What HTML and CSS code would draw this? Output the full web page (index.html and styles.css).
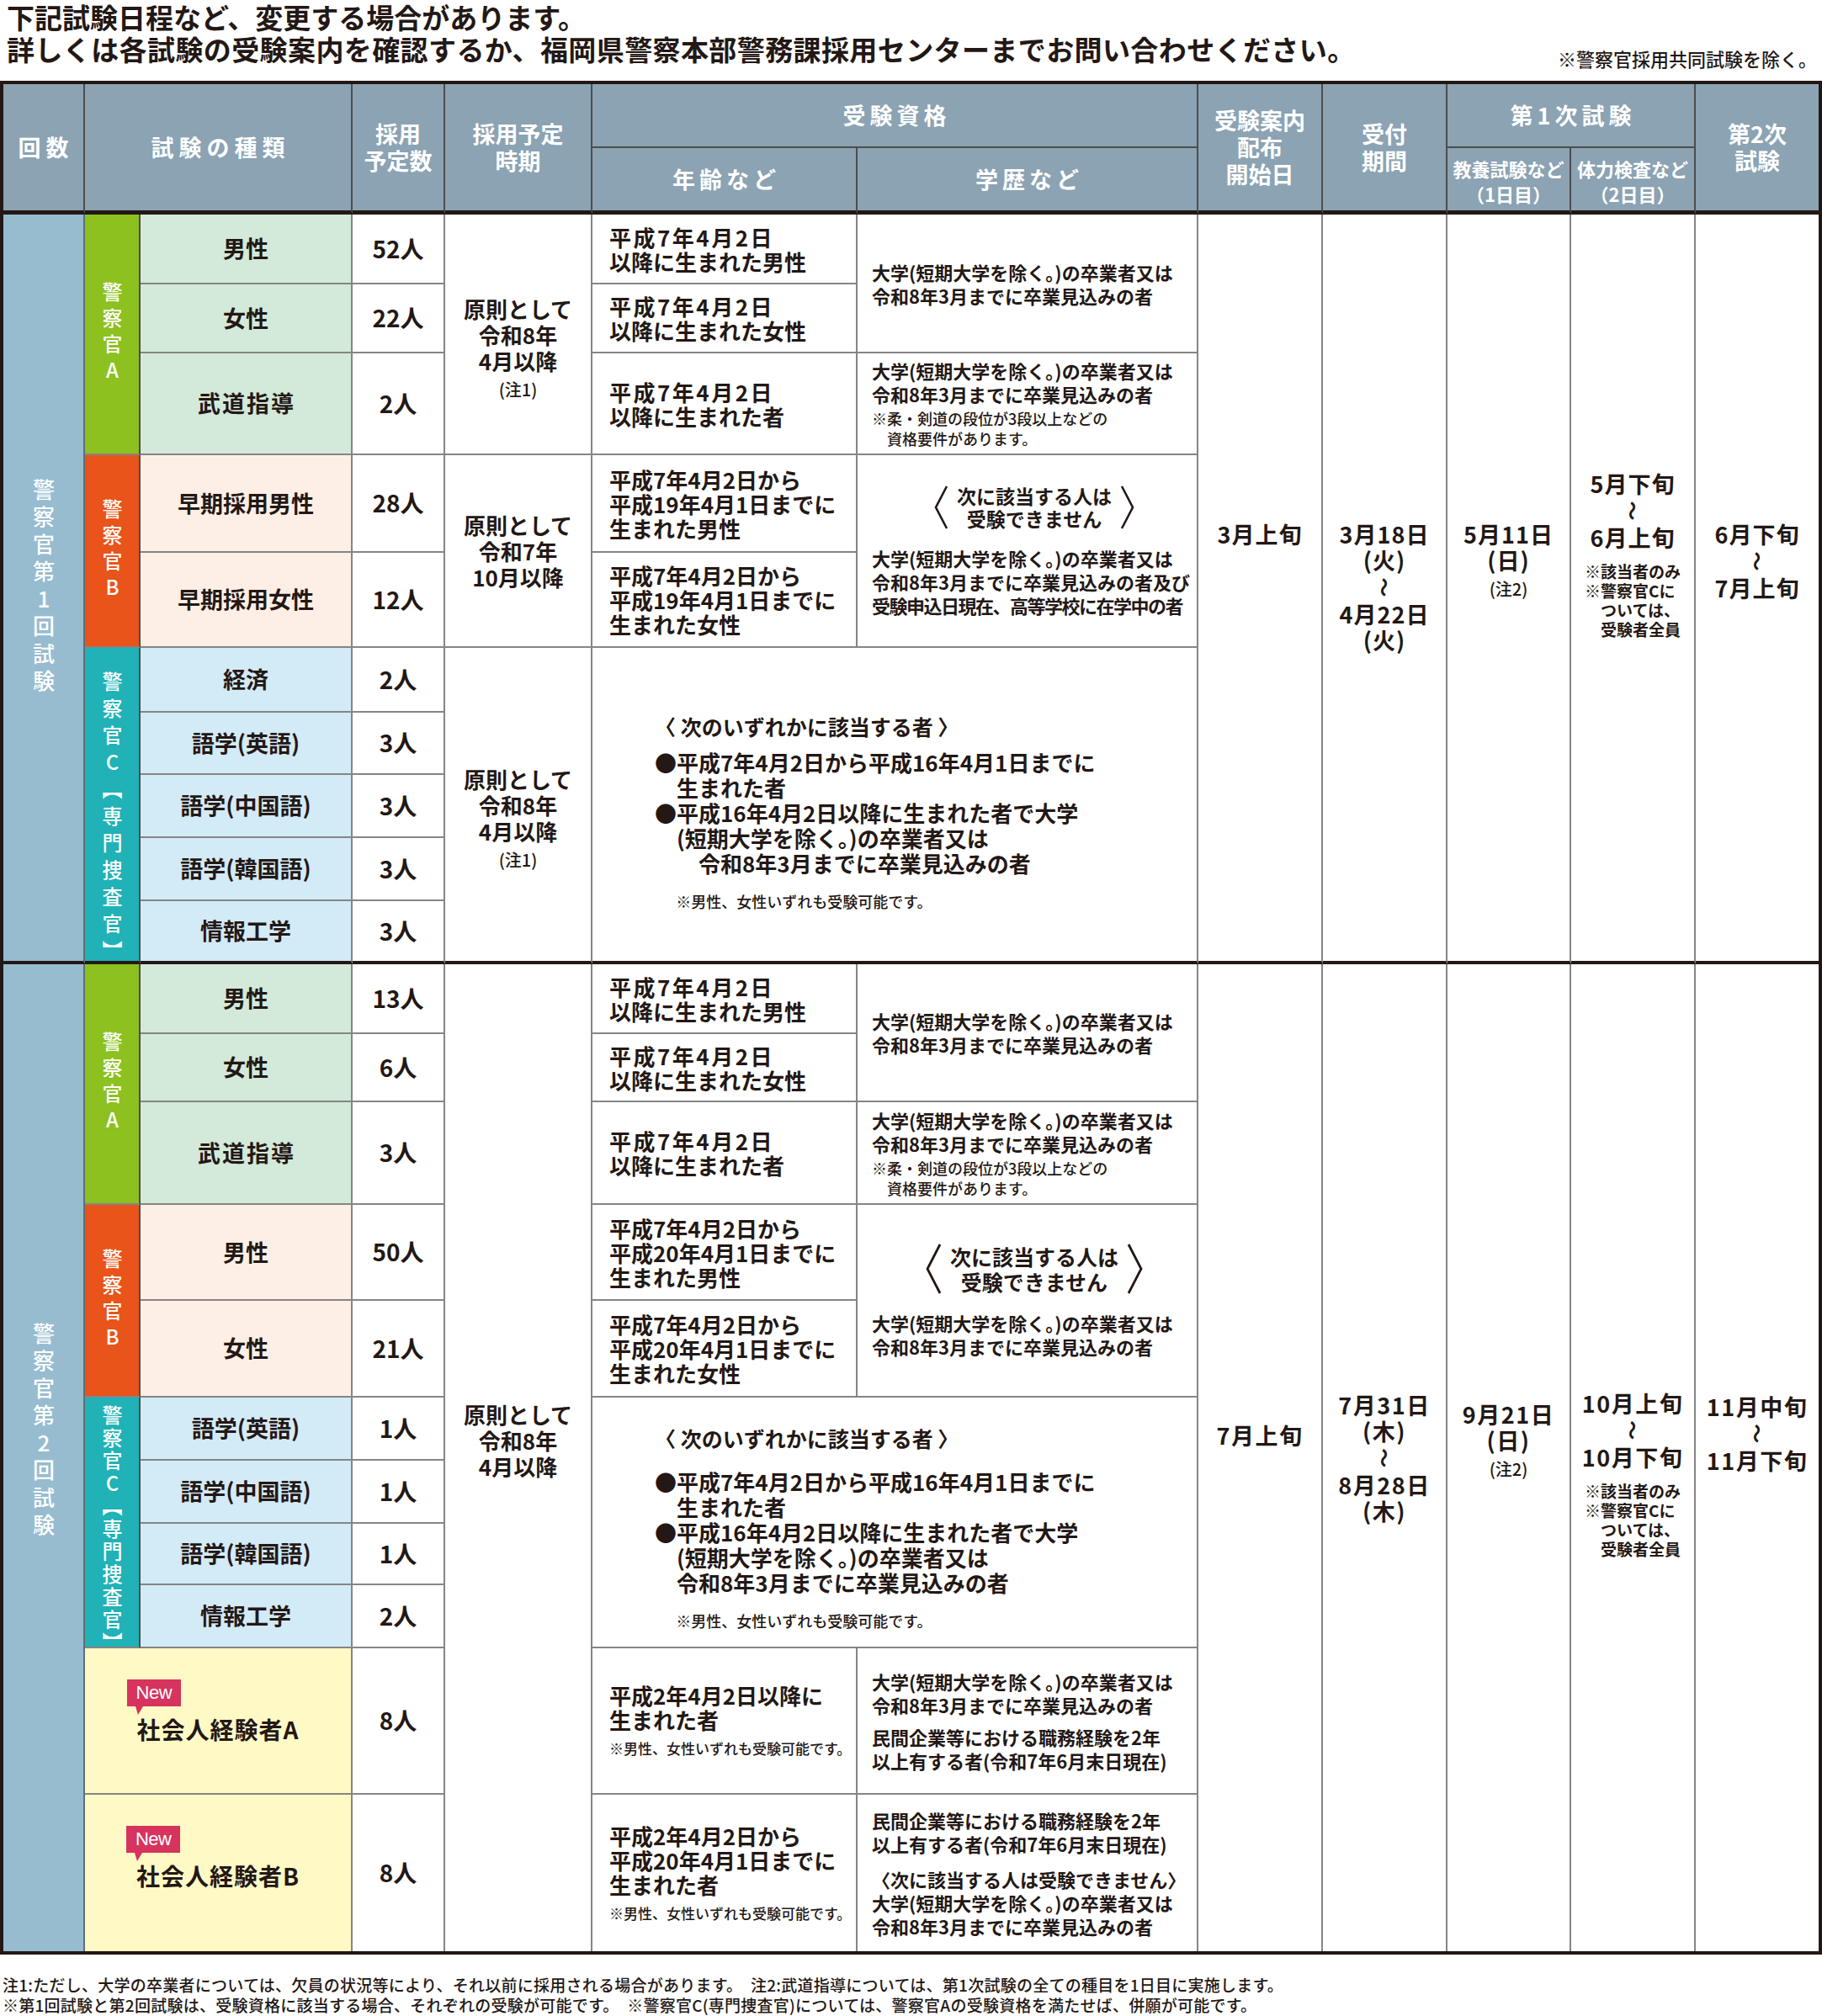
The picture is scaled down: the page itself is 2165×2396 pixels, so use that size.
FILE: index.html
```html
<!DOCTYPE html>
<html lang="ja">
<head>
<meta charset="utf-8">
<title>試験日程</title>
<link rel="stylesheet" href="styles.css">
</head>
<body>
<div class="intro">
  <p class="intro-note">※警察官採用共同試験を除く。</p>
  <p class="intro-text">下記試験日程など、変更する場合があります。<br><span class="l2">詳しくは各試験の受験案内を確認するか、福岡県警察本部警務課採用センターまでお問い合わせください。</span></p>
</div>

<div class="table">
  <!-- header -->
  <div class="cell hd hb c1 r1 rs2"><div class="ls6">回数</div></div>
  <div class="cell hd hb c2 cs2 r1 rs2"><div class="ls6">試験の種類</div></div>
  <div class="cell hd hb c4 r1 rs2"><div>採用<br>予定数</div></div>
  <div class="cell hd hb c5 r1 rs2"><div>採用予定<br>時期</div></div>
  <div class="cell hd c6 cs2 r1"><div class="ls5">受験資格</div></div>
  <div class="cell hd hb c6 r2"><div class="ls5">年齢など</div></div>
  <div class="cell hd hb c7 r2"><div class="ls5">学歴など</div></div>
  <div class="cell hd hb c8 r1 rs2"><div>受験案内<br>配布<br>開始日</div></div>
  <div class="cell hd hb c9 r1 rs2"><div>受付<br>期間</div></div>
  <div class="cell hd c10 cs2 r1"><div class="ls5">第1次試験</div></div>
  <div class="cell hd hb hsm c10 r2"><div>教養試験など<br>（1日目）</div></div>
  <div class="cell hd hb hsm c11 r2"><div>体力検査など<br>（2日目）</div></div>
  <div class="cell hd hb lc c12 r1 rs2"><div>第2次<br>試験</div></div>

  <!-- session 1 -->
  <div class="cell kai sep c1 r3 rs10"><div class="vt vk">警察官第1回試験</div></div>

  <div class="cell lab labA c2 r3 rs3"><div class="vt vl">警察官A</div></div>
  <div class="cell nm nmA c3 r3"><div>男性</div></div>
  <div class="cell num c4 r3"><div>52人</div></div>
  <div class="cell per pn c5 r3 rs3"><div>原則として<br>令和8年<br>4月以降<br><span class="chu">(注1)</span></div></div>
  <div class="cell age c6 r3"><div><span class="sp">平成7年4月2日</span><br>以降に生まれた男性</div></div>
  <div class="cell edu c7 r3 rs2"><div>大学(短期大学を除く。)の卒業者又は<br>令和8年3月までに卒業見込みの者</div></div>

  <div class="cell rc s1t sep c8 r3 rs10"><div>3月上旬</div></div>
  <div class="cell rc s1t sep c9 r3 rs10"><div>3月18日<br>(火)<br><span class="wave">〜</span><br>4月22日<br>(火)</div></div>
  <div class="cell rc s1t sep c10 r3 rs10"><div>5月11日<br>(日)<br><span class="chu2">(注2)</span></div></div>
  <div class="cell rc s1t2 sep c11 r3 rs10"><div>5月下旬<br><span class="wave">〜</span><br>6月上旬</div>
    <div class="rnote">※該当者のみ<br>※警察官Cに<br>　ついては、<br>　受験者全員</div></div>
  <div class="cell rc s1t sep lc c12 r3 rs10"><div>6月下旬<br><span class="wave">〜</span><br>7月上旬</div></div>

  <div class="cell nm nmA c3 r4"><div>女性</div></div>
  <div class="cell num c4 r4"><div>22人</div></div>
  <div class="cell age c6 r4"><div><span class="sp">平成7年4月2日</span><br>以降に生まれた女性</div></div>

  <div class="cell nm nmA c3 r5"><div class="ls2">武道指導</div></div>
  <div class="cell num c4 r5"><div>2人</div></div>
  <div class="cell age c6 r5"><div><span class="sp">平成7年4月2日</span><br>以降に生まれた者</div></div>
  <div class="cell edu c7 r5"><div>大学(短期大学を除く。)の卒業者又は<br>令和8年3月までに卒業見込みの者</div><div class="enote">※柔・剣道の段位が3段以上などの<br>　資格要件があります。</div></div>

  <div class="cell lab labB c2 r6 rs2"><div class="vt vl">警察官B</div></div>
  <div class="cell nm nmB c3 r6"><div>早期採用男性</div></div>
  <div class="cell num c4 r6"><div>28人</div></div>
  <div class="cell per c5 r6 rs2"><div>原則として<br>令和7年<br>10月以降</div></div>
  <div class="cell age c6 r6"><div>平成7年4月2日から<br>平成19年4月1日までに<br>生まれた男性</div></div>
  <div class="cell edu c7 r6 rs2">
    <div class="ng">
      <svg class="br" width="20" height="54" viewBox="0 0 20 54"><polyline points="17,2 4,27 17,52" fill="none" stroke="#231815" stroke-width="2.6"/></svg>
      <div class="ng-t">次に該当する人は<br>受験できません</div>
      <svg class="br" width="20" height="54" viewBox="0 0 20 54"><polyline points="3,2 16,27 3,52" fill="none" stroke="#231815" stroke-width="2.6"/></svg>
    </div>
    <div>大学(短期大学を除く。)の卒業者又は<br>令和8年3月までに卒業見込みの者及び<br><span class="tight">受験申込日現在、高等学校に在学中の者</span></div>
  </div>
  <div class="cell nm nmB c3 r7"><div>早期採用女性</div></div>
  <div class="cell num c4 r7"><div>12人</div></div>
  <div class="cell age c6 r7"><div>平成7年4月2日から<br>平成19年4月1日までに<br>生まれた女性</div></div>

  <div class="cell lab labC sep c2 r8 rs5"><div class="vt vc1">警察官C【専門捜査官】</div></div>
  <div class="cell nm nmC c3 r8"><div>経済</div></div>
  <div class="cell num c4 r8"><div>2人</div></div>
  <div class="cell per pn sep c5 r8 rs5"><div>原則として<br>令和8年<br>4月以降<br><span class="chu">(注1)</span></div></div>
  <div class="cell elig e1 sep c6 cs2 r8 rs5">
    <div class="elig-head">〈 次のいずれかに該当する者 〉</div>
    <div>●平成7年4月2日から平成16年4月1日までに<br>　生まれた者<br>●平成16年4月2日以降に生まれた者で大学<br>　(短期大学を除く。)の卒業者又は<br>　　令和8年3月までに卒業見込みの者</div>
    <div class="elig-note">※男性、女性いずれも受験可能です。</div>
  </div>
  <div class="cell nm nmC c3 r9"><div>語学(英語)</div></div>
  <div class="cell num c4 r9"><div>3人</div></div>
  <div class="cell nm nmC c3 r10"><div>語学(中国語)</div></div>
  <div class="cell num c4 r10"><div>3人</div></div>
  <div class="cell nm nmC c3 r11"><div>語学(韓国語)</div></div>
  <div class="cell num c4 r11"><div>3人</div></div>
  <div class="cell nm nmC sep c3 r12"><div>情報工学</div></div>
  <div class="cell num sep c4 r12"><div>3人</div></div>

  <!-- session 2 -->
  <div class="cell kai k2 lr c1 r13 rs11"><div class="vt vk">警察官第2回試験</div></div>

  <div class="cell lab labA c2 r13 rs3"><div class="vt vl">警察官A</div></div>
  <div class="cell nm nmA c3 r13"><div>男性</div></div>
  <div class="cell num c4 r13"><div>13人</div></div>
  <div class="cell per p2 lr c5 r13 rs11"><div>原則として<br>令和8年<br>4月以降</div></div>
  <div class="cell age c6 r13"><div><span class="sp">平成7年4月2日</span><br>以降に生まれた男性</div></div>
  <div class="cell edu c7 r13 rs2"><div>大学(短期大学を除く。)の卒業者又は<br>令和8年3月までに卒業見込みの者</div></div>

  <div class="cell rc r2s lr t8 c8 r13 rs11"><div>7月上旬</div></div>
  <div class="cell rc r2s lr c9 r13 rs11"><div>7月31日<br>(木)<br><span class="wave">〜</span><br>8月28日<br>(木)</div></div>
  <div class="cell rc r2s lr t10 c10 r13 rs11"><div>9月21日<br>(日)<br><span class="chu2">(注2)</span></div></div>
  <div class="cell rc r2s lr t11 c11 r13 rs11"><div>10月上旬<br><span class="wave">〜</span><br>10月下旬</div>
    <div class="rnote">※該当者のみ<br>※警察官Cに<br>　ついては、<br>　受験者全員</div></div>
  <div class="cell rc r2s lr lc t12 c12 r13 rs11"><div>11月中旬<br><span class="wave">〜</span><br>11月下旬</div></div>

  <div class="cell nm nmA c3 r14"><div>女性</div></div>
  <div class="cell num c4 r14"><div>6人</div></div>
  <div class="cell age c6 r14"><div><span class="sp">平成7年4月2日</span><br>以降に生まれた女性</div></div>

  <div class="cell nm nmA c3 r15"><div class="ls2">武道指導</div></div>
  <div class="cell num c4 r15"><div>3人</div></div>
  <div class="cell age c6 r15"><div><span class="sp">平成7年4月2日</span><br>以降に生まれた者</div></div>
  <div class="cell edu c7 r15"><div>大学(短期大学を除く。)の卒業者又は<br>令和8年3月までに卒業見込みの者</div><div class="enote">※柔・剣道の段位が3段以上などの<br>　資格要件があります。</div></div>

  <div class="cell lab labB c2 r16 rs2"><div class="vt vl">警察官B</div></div>
  <div class="cell nm nmB c3 r16"><div>男性</div></div>
  <div class="cell num c4 r16"><div>50人</div></div>
  <div class="cell age c6 r16"><div>平成7年4月2日から<br>平成20年4月1日までに<br>生まれた男性</div></div>
  <div class="cell edu c7 r16 rs2">
    <div class="ng ng2">
      <svg class="br" width="22" height="62" viewBox="0 0 22 62"><polyline points="19,2 4,31 19,60" fill="none" stroke="#231815" stroke-width="2.8"/></svg>
      <div class="ng-t">次に該当する人は<br>受験できません</div>
      <svg class="br" width="22" height="62" viewBox="0 0 22 62"><polyline points="3,2 18,31 3,60" fill="none" stroke="#231815" stroke-width="2.8"/></svg>
    </div>
    <div>大学(短期大学を除く。)の卒業者又は<br>令和8年3月までに卒業見込みの者</div>
  </div>
  <div class="cell nm nmB c3 r17"><div>女性</div></div>
  <div class="cell num c4 r17"><div>21人</div></div>
  <div class="cell age c6 r17"><div>平成7年4月2日から<br>平成20年4月1日までに<br>生まれた女性</div></div>

  <div class="cell lab labC c2 r18 rs4"><div class="vt vc2">警察官C【専門捜査官】</div></div>
  <div class="cell nm nmC c3 r18"><div>語学(英語)</div></div>
  <div class="cell num c4 r18"><div>1人</div></div>
  <div class="cell elig e2 c6 cs2 r18 rs4">
    <div class="elig-head">〈 次のいずれかに該当する者 〉</div>
    <div>●平成7年4月2日から平成16年4月1日までに<br>　生まれた者<br>●平成16年4月2日以降に生まれた者で大学<br>　(短期大学を除く。)の卒業者又は<br>　令和8年3月までに卒業見込みの者</div>
    <div class="elig-note">※男性、女性いずれも受験可能です。</div>
  </div>
  <div class="cell nm nmC c3 r19"><div>語学(中国語)</div></div>
  <div class="cell num c4 r19"><div>1人</div></div>
  <div class="cell nm nmC c3 r20"><div>語学(韓国語)</div></div>
  <div class="cell num c4 r20"><div>1人</div></div>
  <div class="cell nm nmC c3 r21"><div>情報工学</div></div>
  <div class="cell num c4 r21"><div>2人</div></div>

  <div class="cell nmS shA c2 cs2 r22"><div class="sha-w"><div class="new">New</div><div class="sha-n">社会人経験者A</div></div></div>
  <div class="cell num c4 r22"><div>8人</div></div>
  <div class="cell age c6 r22"><div>平成2年4月2日以降に<br>生まれた者</div><div class="anote">※男性、女性いずれも受験可能です。</div></div>
  <div class="cell edu c7 r22"><div>大学(短期大学を除く。)の卒業者又は<br>令和8年3月までに卒業見込みの者</div><div class="gap">民間企業等における職務経験を2年<br>以上有する者(令和7年6月末日現在)</div></div>

  <div class="cell nmS shB lr c2 cs2 r23"><div class="sha-w"><div class="new">New</div><div class="sha-n">社会人経験者B</div></div></div>
  <div class="cell num lr c4 r23"><div>8人</div></div>
  <div class="cell age lr c6 r23"><div>平成2年4月2日から<br>平成20年4月1日までに<br>生まれた者</div><div class="anote">※男性、女性いずれも受験可能です。</div></div>
  <div class="cell edu lr c7 r23"><div>民間企業等における職務経験を2年<br>以上有する者(令和7年6月末日現在)</div><div class="gap2">〈次に該当する人は受験できません〉<br>大学(短期大学を除く。)の卒業者又は<br>令和8年3月までに卒業見込みの者</div></div>
</div>

<div class="foot">
  <p>注1:ただし、大学の卒業者については、欠員の状況等により、それ以前に採用される場合があります。　注2:武道指導については、第1次試験の全ての種目を1日目に実施します。<br>※第1回試験と第2回試験は、受験資格に該当する場合、それぞれの受験が可能です。　※警察官C(専門捜査官)については、警察官Aの受験資格を満たせば、併願が可能です。</p>
</div>
</body>
</html>
```

FILE: styles.css
```css
* { box-sizing: border-box; }

body {
  margin: 0;
  width: 2165px;
  min-height: 2396px;
  background: #fff;
  color: #231815;
  font-family: "Noto Sans CJK JP", "Noto Sans CJK SC", sans-serif;
}

/* intro */
.intro { height: 96px; padding: 1px 6px 0 8px; }
.intro-text {
  margin: 0;
  font-size: 33px;
  font-weight: 700;
  line-height: 38px;
  white-space: nowrap;
}
.l2 { letter-spacing: 0.4px; }
.intro-note {
  float: right;
  margin: 55px 0 0;
  font-size: 22px;
  line-height: 26px;
  font-weight: 500;
  white-space: nowrap;
}

/* table grid */
.table {
  display: grid;
  width: 2165px;
  border: 4px solid #231815;
  grid-template-columns: 97px 66px 252px 110px 175px 315px 405px 148px 148px 147px 148px 146px;
  grid-template-rows: 76px 79px 83px 82px 121px 116px 113px 77px 74px 75px 75px 75px 83px 81px 122px 114px 115px 75px 75px 73px 75px 174px 186px;
  font-weight: 700;
  font-size: 26px;
  line-height: 1.2;
}

.c1 { grid-column-start: 1; }
.c2 { grid-column-start: 2; }
.c3 { grid-column-start: 3; }
.c4 { grid-column-start: 4; }
.c5 { grid-column-start: 5; }
.c6 { grid-column-start: 6; }
.c7 { grid-column-start: 7; }
.c8 { grid-column-start: 8; }
.c9 { grid-column-start: 9; }
.c10 { grid-column-start: 10; }
.c11 { grid-column-start: 11; }
.c12 { grid-column-start: 12; }
.cs2 { grid-column-end: span 2; }

.r1 { grid-row-start: 1; }
.r2 { grid-row-start: 2; }
.r3 { grid-row-start: 3; }
.r4 { grid-row-start: 4; }
.r5 { grid-row-start: 5; }
.r6 { grid-row-start: 6; }
.r7 { grid-row-start: 7; }
.r8 { grid-row-start: 8; }
.r9 { grid-row-start: 9; }
.r10 { grid-row-start: 10; }
.r11 { grid-row-start: 11; }
.r12 { grid-row-start: 12; }
.r13 { grid-row-start: 13; }
.r14 { grid-row-start: 14; }
.r15 { grid-row-start: 15; }
.r16 { grid-row-start: 16; }
.r17 { grid-row-start: 17; }
.r18 { grid-row-start: 18; }
.r19 { grid-row-start: 19; }
.r20 { grid-row-start: 20; }
.r21 { grid-row-start: 21; }
.r22 { grid-row-start: 22; }
.r23 { grid-row-start: 23; }
.rs2 { grid-row-end: span 2; }
.rs3 { grid-row-end: span 3; }
.rs4 { grid-row-end: span 4; }
.rs5 { grid-row-end: span 5; }
.rs10 { grid-row-end: span 10; }
.rs11 { grid-row-end: span 11; }

.cell {
  min-width: 0;
  min-height: 0;
  display: flex;
  flex-direction: column;
  align-items: center;
  justify-content: center;
  text-align: center;
  border-right: 2px solid #858585;
  border-bottom: 2px solid #858585;
  white-space: nowrap;
}

/* header */
.hd {
  background: #8ba3b3;
  color: #fff;
  font-size: 27px;
  line-height: 32px;
  border-right-color: #4d4d4d;
  border-bottom-color: #4d4d4d;
}
.hsm { font-size: 22px; line-height: 30px; padding-top: 4px; }
.hb { border-bottom: 5px solid #231815; }
.ls6 { letter-spacing: 6px; margin-right: -6px; }
.ls5 { letter-spacing: 5px; margin-right: -5px; }
.ls2 { letter-spacing: 2px; margin-right: -2px; }

.sep { border-bottom: 4px solid #231815; }
.lc { border-right: none; }
.lr { border-bottom: none; }

/* vertical labels */
.vt {
  writing-mode: vertical-rl;
  text-orientation: upright;
  color: #fff;
  line-height: 1;
  font-weight: 500;
}
.vk { font-size: 26px; letter-spacing: 6.5px; }
.vl { font-size: 24px; letter-spacing: 7px; }
.vc1 { font-size: 24px; letter-spacing: 8px; margin-top: 35px; }
.vc2 { font-size: 24px; letter-spacing: 3px; margin-top: 18px; }

.kai { background: #97bcd0; border-right-color: #5f6f78; }
.k2 { padding-bottom: 62px; }
.lab { border-right-color: #4d4d4d; }
.labA { background: #8cc11f; }
.labB { background: #e85419; }
.labC { background: #20b2b7; }

.nm { font-size: 27px; }
.nmA { background: #d3e9d9; }
.nmB { background: #fdefe5; }
.nmC { background: #d3eaf7; }
.nmS { background: #fff9c5; }

.num { font-size: 28px; }

/* period */
.per { font-size: 26px; line-height: 31px; }
.pn { padding-top: 34px; }
.p2 { padding-bottom: 43px; }
.chu { font-size: 20px; font-weight: 500; }

/* age */
.age {
  align-items: flex-start;
  text-align: left;
  padding-left: 20px;
  font-size: 26px;
  line-height: 29px;
}
.sp { letter-spacing: 2.5px; }
.anote { font-size: 17px; line-height: 24px; margin-top: 8px; font-weight: 500; }

/* education */
.edu {
  align-items: flex-start;
  text-align: left;
  padding-left: 17px;
  font-size: 22px;
  line-height: 28px;
}
.enote { font-size: 18px; line-height: 24px; margin-top: 3px; font-weight: 500; }
.tight { letter-spacing: -1.5px; }
.gap { margin-top: 10px; }
.gap2 { margin-top: 14px; }

.ng {
  align-self: center;
  display: flex;
  align-items: center;
  gap: 9px;
  margin-bottom: 19px;
}
.ng-t { font-size: 23px; line-height: 27px; text-align: center; }
.ng2 .ng-t { font-size: 25px; line-height: 30px; }
.br { display: block; }

/* eligibility C */
.elig {
  align-items: flex-start;
  text-align: left;
  padding-left: 74px;
  font-size: 26px;
  line-height: 30px;
}
.e1 { padding-top: 19px; }
.e2 { padding-top: 14px; }
.elig-head { font-size: 25px; margin-bottom: 13px; }
.e2 .elig-head { margin-bottom: 22px; }
.elig-note { font-size: 18px; line-height: 24px; margin-top: 18px; padding-left: 1.4em; font-weight: 500; }

/* right columns */
.rc { font-size: 27px; line-height: 31px; letter-spacing: 1px; }
.s1t { justify-content: flex-start; padding-top: 364px; }
.s1t2 { justify-content: flex-start; padding-top: 304px; }
.r2s { letter-spacing: 1.5px; }
.t8 { padding-bottom: 55px; }
.t10 { padding-bottom: 39px; }
.t11 { padding-top: 39px; }
.t12 { padding-bottom: 58px; }
.chu2 { font-size: 20px; font-weight: 500; letter-spacing: 0; }
.wave {
  display: inline-block;
  transform: rotate(90deg);
  font-size: 23px;
  font-weight: 700;
}
.rnote {
  margin-top: 13px;
  font-size: 19px;
  line-height: 23px;
  text-align: left;
  letter-spacing: 0;
}

/* shakaijin */
.shA { padding-bottom: 22px; }
.shB { padding-bottom: 36px; }
.sha-w { display: flex; flex-direction: column; align-items: flex-start; }
.new {
  position: relative;
  margin-left: -12px;
  margin-bottom: 10px;
  height: 32px;
  padding: 0 11px;
  background: #d7335f;
  color: #fff;
  font-family: "Liberation Sans", Arial, sans-serif;
  font-weight: 400;
  font-size: 22px;
  line-height: 32px;
  letter-spacing: -0.5px;
}
.new::after {
  content: "";
  position: absolute;
  left: 10px;
  top: 100%;
  border-left: 3px solid transparent;
  border-right: 6px solid transparent;
  border-top: 10px solid #d7335f;
}
.sha-n { font-size: 28px; line-height: 34px; letter-spacing: 1px; }

/* footer */
.foot { padding: 24px 0 0 3px; }
.foot p {
  margin: 0;
  font-size: 19px;
  line-height: 24px;
  font-weight: 500;
  letter-spacing: 0.25px;
  white-space: nowrap;
}
```
